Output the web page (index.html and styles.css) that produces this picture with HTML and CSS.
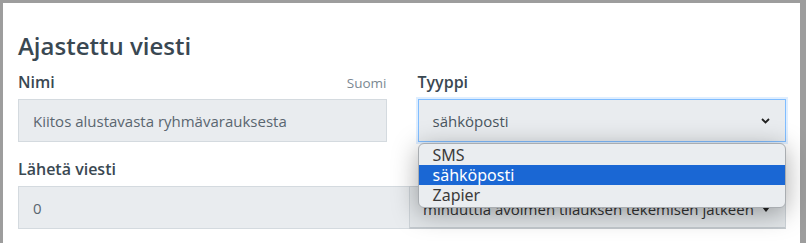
FILE: index.html
```html
<!DOCTYPE html>
<html lang="fi">
<head>
  <meta charset="UTF-8">
  <title>Ajastettu viesti</title>
  <link rel="stylesheet" href="styles.css">
</head>
<body>
  <div class="modal">
    <h1 class="title">Ajastettu viesti</h1>
    <div class="row">
      <div class="field">
        <div class="label-line">
          <label>Nimi</label>
          <span class="lang">Suomi</span>
        </div>
        <div class="input">Kiitos alustavasta ryhmävarauksesta</div>
      </div>
      <div class="field field-type">
        <div class="label-line">
          <label>Tyyppi</label>
        </div>
        <div class="select focused">
          <span>sähköposti</span>
          <svg class="chevron" width="9" height="6" viewBox="0 0 9 6"><path d="M1 1l3.5 3.5L8 1" fill="none" stroke="#222" stroke-width="1.8"/></svg>
        </div>
        <ul class="options">
          <li>SMS</li>
          <li class="active">sähköposti</li>
          <li>Zapier</li>
        </ul>
      </div>
    </div>
    <div class="field">
      <div class="label-line">
        <label>Lähetä viesti</label>
      </div>
      <div class="input-group">
        <div class="input">0</div>
        <div class="select-btn">
          <span class="select-text">minuuttia avoimen tilauksen tekemisen jatkeen</span>
          <span class="caret"></span>
        </div>
      </div>
    </div>
  </div>
</body>
</html>
```
FILE: styles.css
```css
html, body {
  height: 100%;
}
body {
  margin: 0;
  padding: 3px 6px 0 3px;
  box-sizing: border-box;
  background: #9d9d9d;
  font-family: "Open Sans", "Noto Sans", sans-serif;
  color: #3a4852;
  overflow: hidden;
}
.modal {
  background: #fff;
  height: 100%;
  padding: 28px 14px 0 15px;
  box-sizing: border-box;
}
.title {
  margin: 0 0 10px;
  font-size: 24px;
  line-height: 29px;
  font-weight: 600;
  color: #3a4852;
}
.row {
  display: grid;
  grid-template-columns: 1fr 1fr;
  column-gap: 31px;
  margin-bottom: 15px;
}
.field {
  position: relative;
}
.label-line {
  display: flex;
  justify-content: space-between;
  align-items: baseline;
  margin-bottom: 5px;
}
.label-line label {
  font-size: 16px;
  line-height: 24px;
  font-weight: 600;
  color: #3a4852;
}
.lang {
  font-size: 13.5px;
  color: #7b8892;
}
.input, .select {
  height: 43px;
  box-sizing: border-box;
  border: 1px solid #d4dadf;
  background: #e9ecef;
  padding: 0 14px;
  display: flex;
  align-items: center;
  font-size: 15px;
  color: #5a6670;
}
.select {
  justify-content: space-between;
  color: #4a5660;
}
.select.focused {
  border-color: #80bdff;
  box-shadow: 0 0 0 2px rgba(128, 189, 255, 0.25);
}
.chevron {
  margin-right: 1px;
}
.options {
  position: absolute;
  top: 73px;
  left: 0;
  right: 0;
  margin: 0;
  padding: 1px 0 2px;
  list-style: none;
  background: #eaedf0;
  border: 1px solid #a9adb1;
  border-radius: 6px;
  box-shadow: 0 5px 26px rgba(0, 0, 0, 0.34);
  overflow: hidden;
  z-index: 2;
}
.options li {
  height: 20px;
  line-height: 20px;
  padding-left: 14px;
  font-family: "Noto Sans", sans-serif;
  font-size: 16px;
  color: #3b3b3b;
}
.options li.active {
  background: #1a67d4;
  color: #fff;
}
.input-group {
  display: flex;
}
.input-group .input {
  flex: 0 0 391px;
  border-right: none;
}
.select-btn {
  flex: 1;
  min-width: 0;
  height: 43px;
  box-sizing: border-box;
  border: 1px solid #cdd3d8;
  border-bottom: 2px solid #c3c9ce;
  background: #e2e6e9;
  padding: 4px 15px 0 13px;
  display: flex;
  align-items: center;
  justify-content: space-between;
  font-size: 15px;
  color: #333;
}
.select-text {
  white-space: nowrap;
}
.caret {
  flex: none;
  margin-left: 6px;
  width: 0;
  height: 0;
  border-left: 4px solid transparent;
  border-right: 4px solid transparent;
  border-top: 5px solid #222;
}
```
